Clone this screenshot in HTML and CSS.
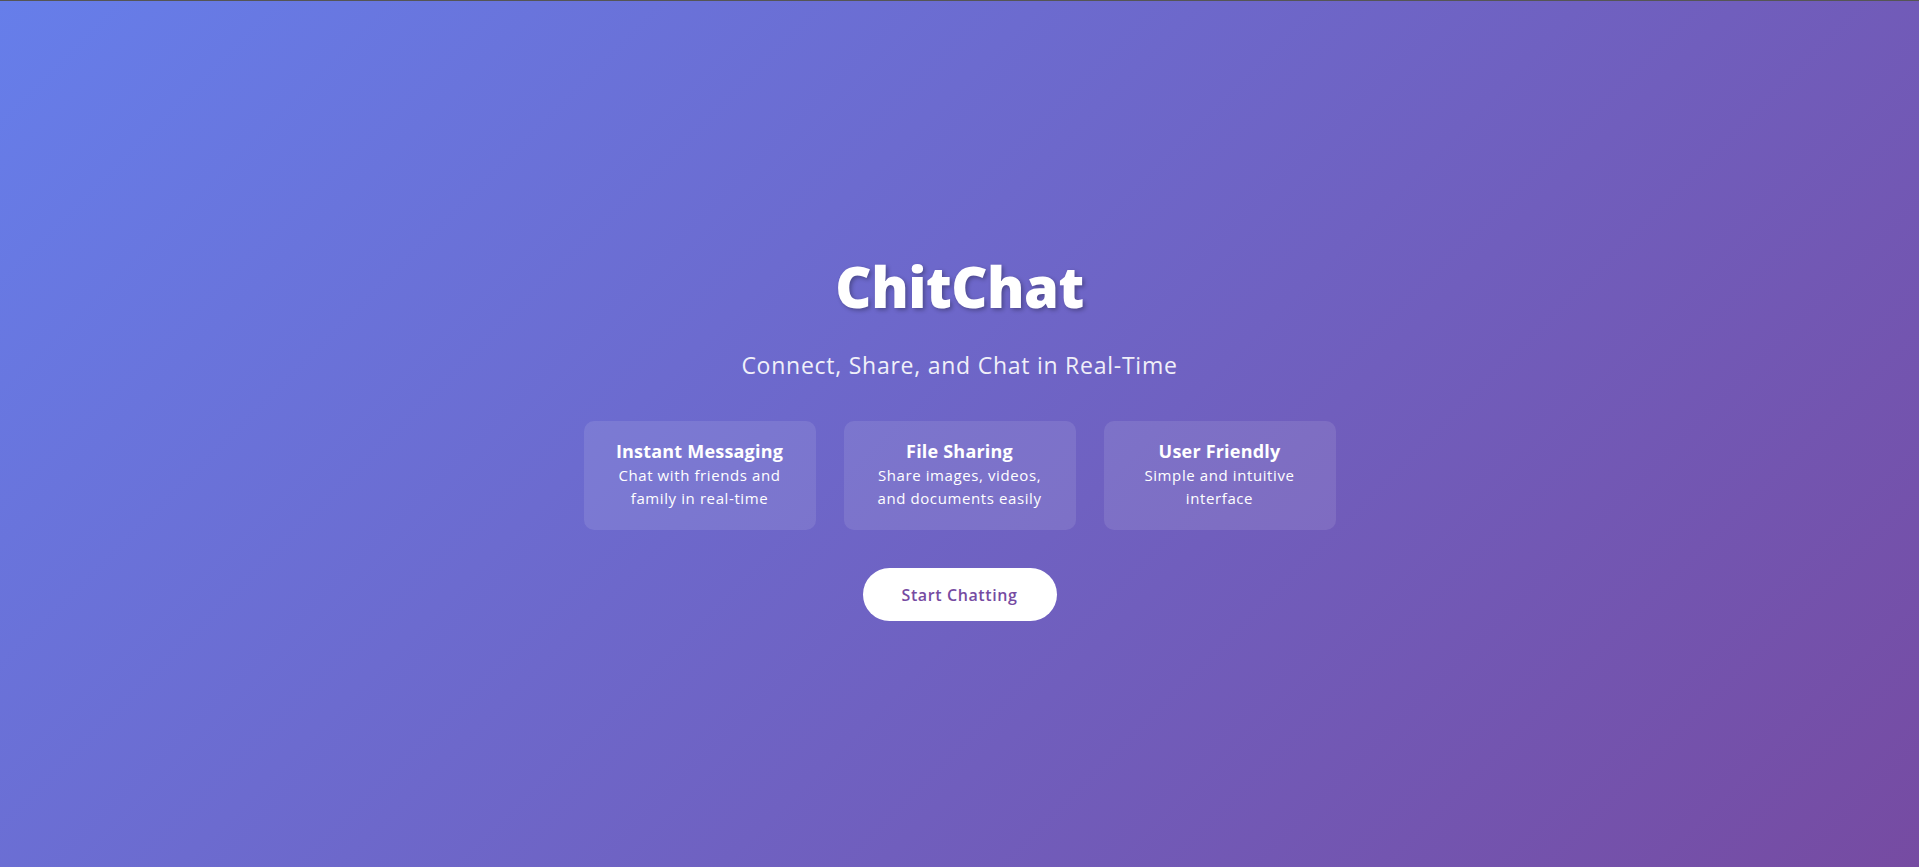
FILE: index.html
```html
<!DOCTYPE html>
<html lang="en">
<head>
<meta charset="utf-8">
<title>ChitChat</title>
<link rel="stylesheet" href="styles.css">
</head>
<body>
<main class="hero">
  <h1 class="hero-title">ChitChat</h1>
  <p class="hero-subtitle">Connect, Share, and Chat in Real-Time</p>
  <div class="features">
    <div class="feature">
      <h3 class="feature-title">Instant Messaging</h3>
      <p class="feature-text">Chat with friends and family in real-time</p>
    </div>
    <div class="feature">
      <h3 class="feature-title">File Sharing</h3>
      <p class="feature-text">Share images, videos, and documents easily</p>
    </div>
    <div class="feature">
      <h3 class="feature-title">User Friendly</h3>
      <p class="feature-text">Simple and intuitive interface</p>
    </div>
  </div>
  <a class="cta" href="#">Start Chatting</a>
</main>
</body>
</html>
```
FILE: styles.css
```css
* { box-sizing: border-box; }
html, body { margin: 0; padding: 0; }
html { height: 100%; overflow: hidden; }
body {
  font-family: "Open Sans", "Noto Sans", sans-serif;
  color: #fff;
  height: 100%;
  background: linear-gradient(135deg, #667eea 0%, #764ba2 100%);
  border-top: 1px solid #555;
}
.hero {
  display: flex;
  flex-direction: column;
  align-items: center;
  padding-top: 251px;
  text-align: center;
}
.hero-title {
  margin: 0;
  font-size: 56px;
  line-height: 68px;
  font-weight: 800;
  letter-spacing: -0.5px;
  text-shadow: 2px 2px 4px rgba(0, 0, 0, 0.3);
}
.hero-subtitle {
  margin: 28px 0 0;
  font-size: 23px;
  line-height: 34px;
  font-weight: 400;
  letter-spacing: 0.75px;
  opacity: 0.9;
}
.features {
  display: flex;
  gap: 28px;
  margin-top: 39px;
}
.feature {
  width: 232px;
  height: 109px;
  padding: 17px 22px 0;
  border-radius: 10px;
  background: rgba(255, 255, 255, 0.1);
}
.feature-title {
  margin: 0;
  font-size: 18px;
  line-height: 26px;
  font-weight: 700;
  letter-spacing: 0.2px;
}
.feature-text {
  margin: 0;
  font-size: 15px;
  line-height: 23px;
  letter-spacing: 0.6px;
}
.cta {
  margin-top: 38px;
  display: inline-flex;
  align-items: center;
  justify-content: center;
  width: 194px;
  height: 53px;
  border-radius: 27px;
  background: #fff;
  color: #764ba2;
  font-size: 16px;
  font-weight: 600;
  letter-spacing: 0.6px;
  text-decoration: none;
}
```
